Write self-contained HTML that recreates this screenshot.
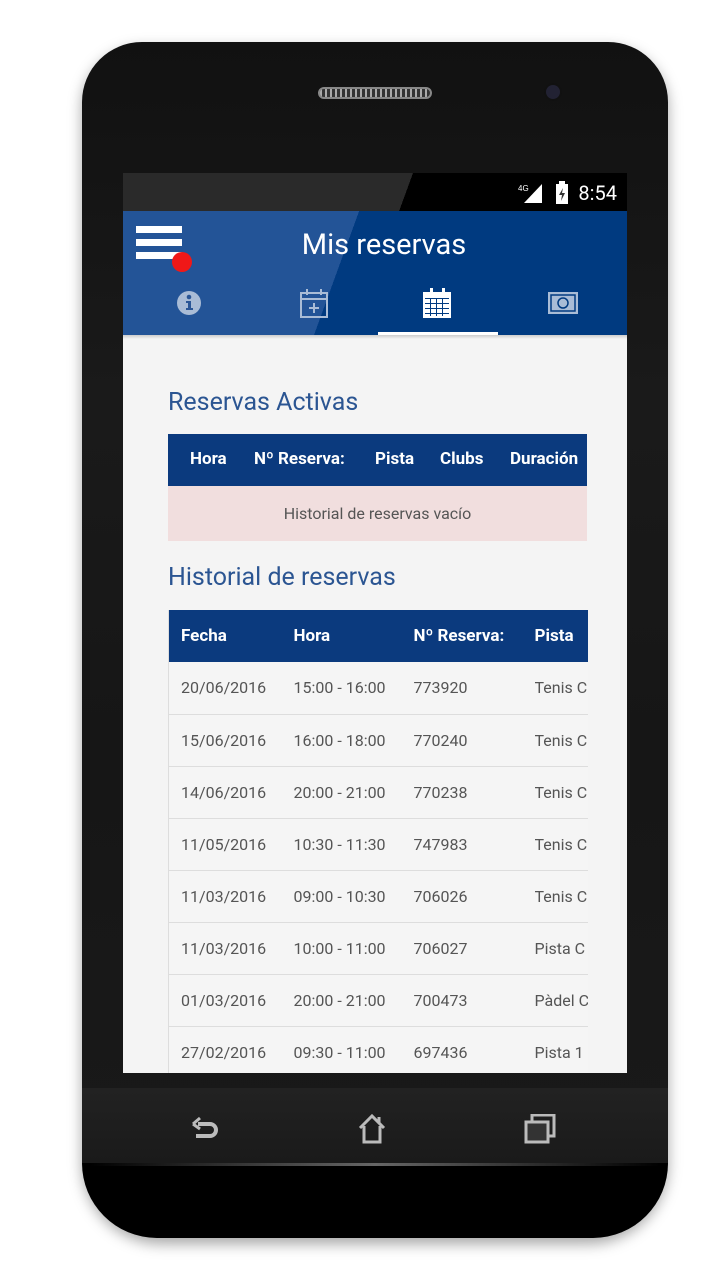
<!DOCTYPE html>
<html><head><meta charset="utf-8"><style>
*{margin:0;padding:0;box-sizing:border-box}
body{width:718px;height:1280px;background:#fff;position:relative;overflow:hidden;font-family:"Roboto","Liberation Sans",sans-serif}
.phone{position:absolute;left:82px;top:42px;width:586px;height:1196px;border-radius:60px 60px 80px 80px;background:linear-gradient(180deg,#111,#1a1a1a 30%,#161616 60%,#1a1a1a);box-shadow:0 6px 14px rgba(0,0,0,.35)}
.chin{position:absolute;left:82px;top:1163px;width:586px;height:75px;background:#000;border-radius:0 0 75px 75px}
.navbar{position:absolute;left:82px;top:1088px;width:586px;height:75px;background:linear-gradient(180deg,#222,#1a1a1a)}
.grille{position:absolute;left:318px;top:87px;width:114px;height:12px;border-radius:6px;background:repeating-linear-gradient(90deg,#aaa 0 2px,#333 2px 5px);border:2px solid #888}
.cam{position:absolute;left:546px;top:85px;width:14px;height:14px;border-radius:50%;background:#223;box-shadow:0 0 0 2px #111;}
.screen{position:absolute;left:123px;top:173px;width:504px;height:900px;background:#f4f4f4;overflow:hidden}
.status{height:38px;background:linear-gradient(110deg,#2a2a2a 0 56%,#000 56%);color:#fff;position:relative}
.appbar{height:124px;background:linear-gradient(110deg,#235497 0 43%,#003a80 43%);position:relative}
.title{position:absolute;left:18px;right:0;top:17px;text-align:center;color:#fff;font-size:29px}
h2{position:absolute;left:45px;color:#2b5592;font-weight:normal;font-size:25px}
table{position:absolute;left:45px;width:419px;border-collapse:collapse}
th{background:#0b3a7e;color:#fff;font-size:17px;text-align:left;height:52px;font-weight:bold}
td{height:52px;font-size:16px;color:#555;border-bottom:1px solid #ddd;background:#f5f5f5;white-space:nowrap}
.ah{position:absolute;top:261px;left:45px;width:419px;height:52px;background:#0b3a7e;color:#fff;font-weight:bold;font-size:17px}
.ah span{position:absolute;top:15px}
</style></head><body>
<div class="phone"></div>
<div class="navbar"></div>
<div class="chin"></div>
<div style="position:absolute;left:90px;top:1163px;width:570px;height:3px;background:linear-gradient(90deg,transparent,#666,transparent)"></div>
<div class="grille"></div><div class="cam"></div>
<div class="screen">
 <div class="status">
  <span style="position:absolute;right:10px;top:8px;font-size:20px">8:54</span>
  <svg style="position:absolute;left:395px;top:9px" width="26" height="22"><text x="0" y="9" font-size="8" fill="#fff" font-family="Liberation Sans">4G</text><path d="M24 2V21H6Z" fill="#fff"/></svg>
  <svg style="position:absolute;left:432px;top:8px" width="14" height="24"><rect x="4" y="0" width="6" height="3" fill="#fff"/><rect x="1" y="3" width="12" height="20" fill="#fff"/><path d="M8 7L4 14H7L6 20L10 12H7Z" fill="#333"/></svg>
 </div>
 <div class="appbar">
  <div style="position:absolute;left:13px;top:15px;width:46px;height:7px;background:#fff"></div>
  <div style="position:absolute;left:13px;top:28px;width:46px;height:7px;background:#fff"></div>
  <div style="position:absolute;left:13px;top:41px;width:46px;height:7px;background:#fff"></div>
  <div style="position:absolute;left:49px;top:41px;width:20px;height:20px;border-radius:50%;background:#f01818"></div>
  <div class="title">Mis reservas</div>
  <svg style="position:absolute;left:53px;top:79px" width="26" height="26"><circle cx="13" cy="13" r="12" fill="#a9bcd6"/><circle cx="13" cy="7" r="2.3" fill="#2a5696"/><path d="M10 11h5v7h2v2h-7v-2h2v-5h-2z" fill="#2a5696"/></svg>
  <svg style="position:absolute;left:176px;top:76px" width="30" height="32" fill="none" stroke="#a9bcd6" stroke-width="2"><rect x="2" y="6" width="26" height="24"/><line x1="2" y1="12" x2="28" y2="12"/><line x1="8" y1="2" x2="8" y2="8"/><line x1="22" y1="2" x2="22" y2="8"/><line x1="15" y1="16" x2="15" y2="26"/><line x1="10" y1="21" x2="20" y2="21"/></svg>
  <svg style="position:absolute;left:299px;top:76px" width="30" height="32"><rect x="1" y="5" width="28" height="26" fill="#fff"/><rect x="8" y="1" width="3" height="7" fill="#fff"/><rect x="20" y="1" width="3" height="7" fill="#fff"/><g fill="#003a80"><rect x="3" y="11" width="24" height="1"/><rect x="3" y="16" width="24" height="1"/><rect x="3" y="21" width="24" height="1"/><rect x="3" y="26" width="24" height="1"/><rect x="8" y="11" width="1" height="18"/><rect x="14" y="11" width="1" height="18"/><rect x="20" y="11" width="1" height="18"/></g></svg>
  <div style="position:absolute;left:255px;top:121px;width:120px;height:3px;background:#fff"></div>
  <svg style="position:absolute;left:424px;top:80px" width="32" height="24"><rect x="1" y="1" width="30" height="22" fill="#a9bcd6"/><rect x="4" y="4" width="24" height="16" fill="none" stroke="#003a80" stroke-width="1.5"/><circle cx="16" cy="12" r="5" fill="#a9bcd6" stroke="#003a80" stroke-width="1.5"/></svg>
 </div>
 <div style="height:4px;background:linear-gradient(#ccc,#f4f4f4)"></div>
 <h2 style="top:215px">Reservas Activas</h2>
 <div class="ah"><span style="left:22px">Hora</span><span style="left:86px">Nº Reserva:</span><span style="left:207px">Pista</span><span style="left:272px">Clubs</span><span style="left:342px">Duración</span></div>
 <div style="position:absolute;top:313px;left:45px;width:419px;height:55px;background:#f1dede;text-align:center;color:#555;font-size:16px;line-height:55px">Historial de reservas vacío</div>
 <h2 style="top:390px">Historial de reservas</h2>
 <table style="top:437px;table-layout:fixed;border-left:1px solid #ddd">
  <colgroup><col style="width:125px"><col style="width:120px"><col style="width:121px"><col style="width:53px"></colgroup>
  <tr><th style="padding-left:12px">Fecha</th><th>Hora</th><th>Nº Reserva:</th><th>Pista</th></tr>
  <tr><td style="padding-left:12px">20/06/2016</td><td>15:00 - 16:00</td><td>773920</td><td style="overflow:hidden">Tenis C</td></tr>
  <tr><td style="padding-left:12px">15/06/2016</td><td>16:00 - 18:00</td><td>770240</td><td style="overflow:hidden">Tenis C</td></tr>
  <tr><td style="padding-left:12px">14/06/2016</td><td>20:00 - 21:00</td><td>770238</td><td style="overflow:hidden">Tenis C</td></tr>
  <tr><td style="padding-left:12px">11/05/2016</td><td>10:30 - 11:30</td><td>747983</td><td style="overflow:hidden">Tenis C</td></tr>
  <tr><td style="padding-left:12px">11/03/2016</td><td>09:00 - 10:30</td><td>706026</td><td style="overflow:hidden">Tenis C</td></tr>
  <tr><td style="padding-left:12px">11/03/2016</td><td>10:00 - 11:00</td><td>706027</td><td style="overflow:hidden">Pista C</td></tr>
  <tr><td style="padding-left:12px">01/03/2016</td><td>20:00 - 21:00</td><td>700473</td><td style="overflow:hidden">Pàdel C</td></tr>
  <tr><td style="padding-left:12px">27/02/2016</td><td>09:30 - 11:00</td><td>697436</td><td style="overflow:hidden">Pista 1</td></tr>
 </table>
</div>
<svg style="position:absolute;left:190px;top:1115px" width="30" height="28" fill="none" stroke="#bbb" stroke-width="4"><path d="M8 9H20a6 6 0 0 1 0 12H6"/><path d="M3 9L10 3M3 9L10 14" stroke-width="3"/></svg>
<svg style="position:absolute;left:357px;top:1113px" width="30" height="32" fill="none" stroke="#bbb" stroke-width="3"><path d="M3 15L15 3L27 15M7 13V29H23V13"/><path d="M22 4V10"/></svg>
<svg style="position:absolute;left:524px;top:1114px" width="32" height="30"><rect x="8" y="1" width="22" height="21" fill="none" stroke="#bbb" stroke-width="3"/><rect x="2" y="8" width="22" height="20" fill="#333" stroke="#bbb" stroke-width="3"/></svg>
</body></html>
